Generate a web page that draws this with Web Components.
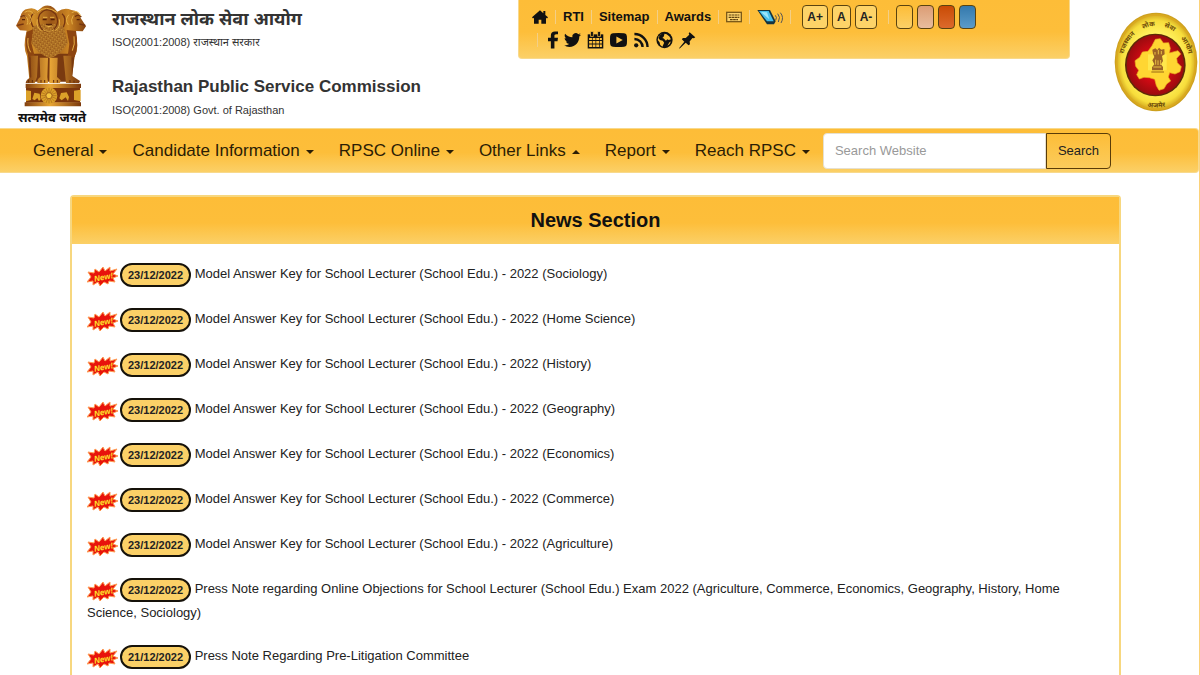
<!DOCTYPE html>
<html lang="en">
<head>
<meta charset="utf-8">
<meta name="viewport" content="width=device-width, initial-scale=1">
<title>Rajasthan Public Service Commission</title>
<style>
    html {
        overflow: hidden;
    }

    body {
        --bar: linear-gradient(#fdbd38 0%, #fdbe3a 55%, #fbd067 100%);
        --edge: #f8d98c;
        margin: 0;
        border-right: 1px solid #fbd27a;
        background: white;
        color: #222;
        font: 13px/22px "Liberation Sans", "Noto Sans", sans-serif;
    }
</style>
</head>
<body>
<site-header></site-header>
<main-nav>
    <nav-item>General</nav-item>
    <nav-item>Candidate Information</nav-item>
    <nav-item>RPSC Online</nav-item>
    <nav-item open>Other Links</nav-item>
    <nav-item>Report</nav-item>
    <nav-item>Reach RPSC</nav-item>
</main-nav>
<news-panel>
    <span slot="title">News Section</span>
    <news-item date="23/12/2022">Model Answer Key for School Lecturer (School Edu.) - 2022 (Sociology)</news-item>
    <news-item date="23/12/2022">Model Answer Key for School Lecturer (School Edu.) - 2022 (Home Science)</news-item>
    <news-item date="23/12/2022">Model Answer Key for School Lecturer (School Edu.) - 2022 (History)</news-item>
    <news-item date="23/12/2022">Model Answer Key for School Lecturer (School Edu.) - 2022 (Geography)</news-item>
    <news-item date="23/12/2022">Model Answer Key for School Lecturer (School Edu.) - 2022 (Economics)</news-item>
    <news-item date="23/12/2022">Model Answer Key for School Lecturer (School Edu.) - 2022 (Commerce)</news-item>
    <news-item date="23/12/2022">Model Answer Key for School Lecturer (School Edu.) - 2022 (Agriculture)</news-item>
    <news-item date="23/12/2022">Press Note regarding Online Objections for School Lecturer (School Edu.) Exam 2022 (Agriculture, Commerce, Economics, Geography, History, Home Science, Sociology)</news-item>
    <news-item date="21/12/2022">Press Note Regarding Pre-Litigation Committee</news-item>
</news-panel>

<script>
const icons = {
    home: `<path d="M12 2 0 12.5l1.5 1.7L3 13v9h7v-6h4v6h7v-9l1.500 1.200L24 12.500l-4-3.500V3h-3v3.300z"/>`,
    facebook: `<path d="M19 0v4h-2.500C14.400 4 14 5 14 6.500V9h5l-.7 4.600H14V24H9V13.600H5V9h4V5.600C9 2 11.200 0 14.700 0z"/>`,
    twitter: `<path d="M23.953 4.57a10 10 0 01-2.825.775 4.958 4.958 0 002.163-2.723c-.951.555-2.005.959-3.127 1.184a4.92 4.92 0 00-8.384 4.482C7.69 8.095 4.067 6.13 1.64 3.162a4.822 4.822 0 00-.666 2.475c0 1.71.87 3.213 2.188 4.096a4.904 4.904 0 01-2.228-.616v.06a4.923 4.923 0 003.946 4.827 4.996 4.996 0 01-2.212.085 4.936 4.936 0 004.604 3.417 9.867 9.867 0 01-6.102 2.105c-.39 0-.779-.023-1.17-.067a13.995 13.995 0 007.557 2.209c9.053 0 13.998-7.496 13.998-13.985 0-.21 0-.42-.015-.63A9.935 9.935 0 0024 4.59z"/>`,
    calendar: `<path d="M1 4h22v20H1z"/><path fill="#fdc03f" d="M3 9h4v3H3zm5 0h4v3H8zm5 0h4v3h-4zm5 0h3v3h-3zM3 13.500h4v3.500H3zm5 0h4v3.500H8zm5 0h4v3.500h-4zm5 0h3v3.500h-3zM3 18.500h4V22H3zm5 0h4V22H8zm5 0h4V22h-4zm5 0h3V22h-3z"/><path stroke="#fdc03f" d="M5 0h4v7H5zm10 0h4v7h-4z"/>`,
    youtube: `<path fill-rule="evenodd" d="M4 2.500Q12 1.500 20 2.500q3.500.4 3.800 4 .4 5.500 0 11-.3 3.600-3.800 4-8 1-16 0-3.500-.4-3.800-4-.4-5.500 0-11Q.5 2.900 4 2.500zM9 7v10l9-5z"/>`,
    rss: `<g fill="none" stroke="#111" stroke-width="3.400"><path d="M2 3.500A18.500 18.500 0 0 1 20.500 22"/><path d="M2 10.500A11.500 11.500 0 0 1 13.500 22"/></g><circle cx="4.500" cy="19.500" r="3"/>`,
    globe: `<circle cx="12" cy="12" r="11.500"/><path fill="#fdc341" d="M9 2.500 5.500 5 3.500 9l2 3 4 1 2 3-2.500 5.500L6 19l-1-4-2.500-3 1-5zM12 3l3 1 4 3 2 4-3 1-2-1-2 2-3-3-2-1 2-2zm7 12 2-1-2 4-3 2z"/>`,
    pin: `<path d="M15 1l8 7-2 1.500-2-.5-4 5 .5 4-2 1.500-4-3.500L1 24l-1-.5 7.500-9L4 11l1.500-2 4 0 5-4.500-.8-2z"/>`,
    keyboard: `<path fill="#7c5a18" d="M0 4h24v16H0z"/><path fill="#fdd36c" d="M2 6h20v12H2z"/><path stroke="#5f430f" stroke-width="1.800" d="M4 9h16M4 12.500h16M6 16h12" stroke-dasharray="4 .7"/>`
};

class FaIcon extends HTMLElement {
    constructor() {
        super();
        this.shadowDOM = this.attachShadow({mode: "open"});
    }

    connectedCallback() {
        const name = this.getAttribute("name"),
            // the f is much narrower than the other icons
            box = name === "facebook" ? "5 0 14 24" : "0 0 24 24";

        this.shadowDOM.innerHTML = `
            <style>
                :host {
                    display: block;
                    width: 16px;
                    height: 16px;
                }

                svg {
                    display: block;
                    width: 100%;
                    height: 100%;
                    fill: #111;
                }
            </style>
            <svg viewBox="${box}" aria-hidden="true">${icons[name]}</svg>`;
    }
}

class StateEmblem extends HTMLElement {
    constructor() {
        super();
        this.shadowDOM = this.attachShadow({mode: "open"});
    }

    connectedCallback() {
        this.shadowDOM.innerHTML = `
            <style>
                :host {
                    display: flex;
                    flex-direction: column;
                    align-items: center;
                    width: 74px;
                }

                svg {
                    width: 74px;
                    height: 104px;
                }

                span {
                    color: #111;
                    font-size: 13px;
                    font-weight: bold;
                    line-height: 20px;
                    white-space: nowrap;
                }
            </style>
            <svg viewBox="45 12 222 310" role="img" aria-label="State emblem">
                <defs>
                    <linearGradient id="gold" x2="1">
                        <stop offset="0" stop-color="#a65a1a"/>
                        <stop offset=".25" stop-color="#d08d27"/>
                        <stop offset=".5" stop-color="#9a5517"/>
                        <stop offset=".75" stop-color="#cb8523"/>
                        <stop offset="1" stop-color="#83400f"/>
                    </linearGradient>
                    <linearGradient id="leg" x2="1">
                        <stop offset="0" stop-color="#82400f"/>
                        <stop offset=".45" stop-color="#e8a636"/>
                        <stop offset="1" stop-color="#7a380c"/>
                    </linearGradient>
                    <pattern id="mane" width="9" height="9" patternUnits="userSpaceOnUse" patternTransform="rotate(35)">
                        <rect width="9" height="9" fill="#8c4a13"/>
                        <path d="M0 2h7M2 6h7" stroke="#efbd48" stroke-width="2"/>
                    </pattern>
                </defs>
                <path fill="url(#gold)" d="M60 90 48 76l12-23Q64 27 85 25q16-5 28 6l15-12q18-8 34 4l10 11q22-15 42-5 24 2 28 24l16 25-10 15-22-1q13 54-2 75l-9 70H88l-7-69Q67 139 80 91z"/>
                <path fill="#7a3a10" d="M84 160h140l-9 84H90z"/>
                <path fill="url(#mane)" d="M98 77q50-14 92 0l14 50q-20 36-54 47-39-14-57-50z"/>
                <path fill="#8d4510" d="M80 95q-8 48 8 76l18 4-12-46 5-42zm148-3q9 47-4 78l-22 5 6-44-8-42z"/>
                <g fill="none" stroke="#753510" stroke-width="4">
                    <path d="M102 38q-18 13-3 42M186 40q16 12 4 41"/>
                    <path d="M119 42q22-27 48 0 14 26-5 45-18 14-37-1-16-24-6-44z"/>
                    <path d="M62 50q10-9 18 1M52 75l19-4M225 49q10-8 19 1M256 75l-18-4"/>
                </g>
                <g fill="none" stroke="#e7b044" stroke-width="3">
                    <path d="M74 36q18-11 28 7M85 42q16 14 3 30M76 46q12 14 5 27M215 37q18-10 27 9M207 43q-14 13-2 31M220 45q-9 13-3 27M112 36q26-24 60 1M112 57q-5 24 13 35M178 57q5 24-12 34"/>
                    <path d="M129 51h13m8 0h13M138 76q9 6 18 0M129 88q17 10 33 0"/>
                    <path d="M84 113q-3 25 8 43m130-48q4 24-5 43"/>
                </g>
                <path fill="#562207" d="M128 55h12v5h-12zm24 0h12v5h-12zM66 56h9v4h-9zm164 0h9v4h-9zM138 70h18v5h-18z"/>
                <g fill="url(#leg)">
                    <path d="M92 166h22l-3 64-7 18H77q2-12 17-17zM119 172h25l-2 58 2 18h-32q-2-12 9-18zM149 172h24l-2 58 11 10-2 8h-32zM190 166h24l2 60 24 16-3 6h-39z"/>
                    <path d="M77 250h166v13H77z"/>
                    <path fill="#7c360c" d="M78 263h162v44H78z"/>
                    <path d="M74 306h169v12H74z"/>
                </g>
                <path stroke="#602a0a" stroke-width="3" d="M86 247v-8m11 8v-8m26 8v-8m11 8v-8m27 8v-8m11 8v-8m38 8v-8m12 8v-6"/>
                <g fill="#dca129">
                    <circle cx="147" cy="286" r="25"/>
                    <path d="m78 270 15 2v27l-15 4zM242 268l-20 3v28l20 4zM97 296l6-19 16 3 3 17-5 5-5-9-8 7zM178 294l5-16 17-2 7 14-3 12-7-11-12 9z"/>
                </g>
                <path stroke="#a7681b" stroke-width="2" d="M147 263v46m-23-23h46m-39-16 32 32m0-32-32 32m7-38 18 44m0-44-18 44m-13-31 44 18m0-18-44 18"/>
                <circle cx="147" cy="286" r="9" fill="#f6c63f" stroke="#8b4b14" stroke-width="2"/>
            </svg>
            <span lang="hi">सत्यमेव जयते</span>`;
    }
}

class CommissionSeal extends HTMLElement {
    constructor() {
        super();
        this.shadowDOM = this.attachShadow({mode: "open"});
    }

    connectedCallback() {
        this.shadowDOM.innerHTML = `
            <style>
                :host {
                    display: block;
                    width: 84px;
                    height: 100px;
                }

                svg {
                    display: block;
                    width: 100%;
                    height: 100%;
                }

                text {
                    fill: #6d4a08;
                    font-size: 20px;
                    font-weight: bold;
                }
            </style>
            <svg viewBox="43 37 252 300" role="img" aria-label="Commission seal">
                <defs>
                    <radialGradient id="ring">
                        <stop offset=".6" stop-color="#fff05d"/>
                        <stop offset=".84" stop-color="#f7dd3b"/>
                        <stop offset="1" stop-color="#c99a1a"/>
                    </radialGradient>
                    <radialGradient id="red">
                        <stop offset=".5" stop-color="#d50a14"/>
                        <stop offset="1" stop-color="#9c0b0e"/>
                    </radialGradient>
                    <path id="arc" d="M69 222A102 120 0 1 1 269 222"/>
                    <path id="low" d="M120 315Q169 332 220 315"/>
                </defs>
                <ellipse cx="169" cy="187" rx="124" ry="148" fill="url(#ring)"/>
                <ellipse cx="169" cy="187" rx="118" ry="141" fill="none" stroke="#dba91f" stroke-width="4"/>
                <ellipse cx="167" cy="196" rx="91" ry="94" fill="#5d2a06"/>
                <ellipse cx="167" cy="196" rx="86" ry="90" fill="url(#red)"/>
                <path fill="#ffd632" stroke="#e9a91c" stroke-width="2" d="m106 183 14-10 8-16 17-2 12-17 10-19 15-2 9 13 16-1 5 17-3 14 26-7 8 10-12 13 2 13 12 12-4 15-15 7-16-4-4 13 7 12-12 9-8 14-15 5-8-14-5-19-16-5-16-1-14 5-8-13 6-13-9-12z"/>
                <path fill="#fff15e" d="M145 164h56v48h-56z" opacity=".6"/>
                <path fill="#9c6226" d="M160 162l-2-12 9-4 6 5 5-7 7 6 9-2 1 16-8 5 3 15-6 10 6 8v10h-33v-9l7-9-6-12 6-10z"/>
                <path stroke="#e9bf42" stroke-width="3" fill="none" d="M166 157v8m10-14v13m9-10v10M168 180v15m7-13v14m8-15v15M161 202h24"/>
                <path stroke="#976617" stroke-width="3" d="M155 217h38"/>
                <text lang="hi"><textPath href="#arc" startOffset="50%" text-anchor="middle">राजस्थान &#160; &#160; लोक &#160; &#160; सेवा &#160; &#160; आयोग</textPath></text>
                <text lang="hi"><textPath href="#low" startOffset="50%" text-anchor="middle">अजमेर</textPath></text>
            </svg>`;
    }
}

class ToolBar extends HTMLElement {
    constructor() {
        super();
        this.shadowDOM = this.attachShadow({mode: "open"});
    }

    connectedCallback() {
        this.shadowDOM.innerHTML = `
            <style>
                :host {
                    display: block;
                    box-sizing: border-box;
                    height: 59px;
                    padding: 4px 13px 0;
                    background: var(--bar);
                    border: 1px solid var(--edge);
                    border-top: 0;
                    border-radius: 0 0 4px 4px;
                    font-weight: bold;
                }

                .row {
                    display: flex;
                    align-items: center;
                    height: 25px;
                }

                .links {
                    gap: 7px;
                }

                .social {
                    gap: 6px;
                    padding-left: 5px;
                    height: 22px;
                }

                .social fa-icon {
                    width: 17px;
                    height: 18px;
                }

                .social .narrow fa-icon {
                    width: 10px;
                    margin-left: 4px;
                }

                a {
                    color: #111;
                    text-decoration: none;
                }

                i {
                    width: 1px;
                    height: 14px;
                    background: #f3cf87;
                }

                .screen {
                    display: block;
                    width: 26px;
                    height: 16px;
                }

                button {
                    box-sizing: border-box;
                    height: 24px;
                    padding: 0 4px;
                    border: 1px solid #5a430f;
                    border-radius: 4px;
                    background: #fdd368;
                    color: #222;
                    font: bold 12px/20px "Liberation Sans", sans-serif;
                }

                .sizes, .themes {
                    display: flex;
                    gap: 4px;
                }

                .sizes {
                    margin: 0 4px;
                }

                .themes button {
                    width: 17px;
                    padding: 0;
                }
            </style>
            <div class="row links">
                <a href="#home" aria-label="Home"><fa-icon name="home"></fa-icon></a>
                <i></i>
                <a href="#rti">RTI</a>
                <i></i>
                <a href="#sitemap">Sitemap</a>
                <i></i>
                <a href="#awards">Awards</a>
                <i></i>
                <a href="#keyboard" aria-label="Keyboard"><fa-icon name="keyboard"></fa-icon></a>
                <i></i>
                <a href="#reader" aria-label="Screen reader">
                    <svg class="screen" viewBox="0 0 78 48">
                        <path fill="#16343f" d="M1 3h38l17 34-5 9H30z"/>
                        <path fill="#49c0ea" d="M6 6h29l15 31H30z"/>
                        <path fill="#9be5fa" d="m12 9 18 1 7 21z"/>
                        <path fill="none" stroke="#555" stroke-width="3" d="M55 19q6 6 1 15m6-20q10 10 2 25m6-28q12 14 2 31"/>
                    </svg>
                </a>
                <i></i>
                <div class="sizes">
                    <button type="button">A+</button>
                    <button type="button">A</button>
                    <button type="button">A-</button>
                </div>
                <i></i>
                <div class="themes">
                    <button type="button" aria-label="Yellow theme" style="background: linear-gradient(#fdbd38, #fbd067)"></button>
                    <button type="button" aria-label="Peach theme" style="background: linear-gradient(#dc9d75, #e8bd9e)"></button>
                    <button type="button" aria-label="Orange theme" style="background: linear-gradient(#c94b05, #dc6a2c)"></button>
                    <button type="button" aria-label="Blue theme" style="background: linear-gradient(#3479ad, #5b9bc8)"></button>
                </div>
            </div>
            <div class="row social">
                <i></i>
                <a class="narrow" href="#facebook" aria-label="Facebook"><fa-icon name="facebook"></fa-icon></a>
                <a href="#twitter" aria-label="Twitter"><fa-icon name="twitter"></fa-icon></a>
                <a href="#calendar" aria-label="Calendar"><fa-icon name="calendar"></fa-icon></a>
                <a href="#youtube" aria-label="YouTube"><fa-icon name="youtube"></fa-icon></a>
                <a href="#rss" aria-label="RSS"><fa-icon name="rss"></fa-icon></a>
                <a href="#world" aria-label="Websites"><fa-icon name="globe"></fa-icon></a>
                <a href="#pin" aria-label="Notices"><fa-icon name="pin"></fa-icon></a>
            </div>`;
    }
}

class SiteHeader extends HTMLElement {
    constructor() {
        super();
        this.shadowDOM = this.attachShadow({mode: "open"});
    }

    connectedCallback() {
        this.shadowDOM.innerHTML = `
            <style>
                :host {
                    display: grid;
                    grid-template-columns: 97px 406px minmax(0, 1fr) 129px;
                    height: 128px;
                    padding-left: 15px;
                }

                state-emblem {
                    margin-top: 4px;
                }

                commission-seal {
                    margin: 12px 1px 0 auto;
                }

                .names {
                    padding-top: 6px;
                    color: #333;
                }

                h1, h2 {
                    margin: 0;
                    font-size: 18px;
                    line-height: 26px;
                }

                h2 {
                    margin-top: 22px;
                    font-size: 17px;
                }

                p {
                    margin: 0;
                    font-size: 11px;
                    line-height: 20px;
                }
            </style>
            <state-emblem></state-emblem>
            <div class="names">
                <h1 lang="hi">राजस्थान लोक सेवा आयोग</h1>
                <p>ISO(2001:2008) राजस्थान सरकार</p>
                <h2>Rajasthan Public Service Commission</h2>
                <p>ISO(2001:2008) Govt. of Rajasthan</p>
            </div>
            <tool-bar></tool-bar>
            <commission-seal></commission-seal>`;
    }
}

class MainNav extends HTMLElement {
    constructor() {
        super();
        this.shadowDOM = this.attachShadow({mode: "open"});
    }

    connectedCallback() {
        this.shadowDOM.innerHTML = `
            <style>
                :host {
                    display: block;
                }

                nav {
                    display: flex;
                    align-items: center;
                    box-sizing: border-box;
                    height: 45px;
                    padding: 0 87px 0 33px;
                    background: var(--bar);
                    border: 1px solid var(--edge);
                    border-left: 0;
                    border-radius: 0 4px 4px 0;
                }

                .items {
                    display: flex;
                    gap: 25px;
                }

                form {
                    display: flex;
                    flex: 1;
                    margin-left: 13px;
                }

                input, button {
                    box-sizing: border-box;
                    height: 36px;
                    font: 13px "Liberation Sans", sans-serif;
                }

                input {
                    flex: 1;
                    min-width: 0;
                    padding: 0 11px;
                    border: 1px solid #e6e0d0;
                    border-radius: 4px 0 0 4px;
                    background: white;
                }

                input::placeholder {
                    color: #999;
                }

                button {
                    width: 65px;
                    padding: 0;
                    border: 1px solid #5a3c08;
                    border-radius: 0 4px 4px 0;
                    background: linear-gradient(#fdbd38, #fbcc5c);
                    color: #222;
                }
            </style>
            <nav>
                <div class="items"><slot></slot></div>
                <form>
                    <input type="search" placeholder="Search Website" aria-label="Search Website">
                    <button type="button">Search</button>
                </form>
            </nav>`;
    }
}

class NavItem extends HTMLElement {
    constructor() {
        super();
        this.shadowDOM = this.attachShadow({mode: "open"});
    }

    connectedCallback() {
        const open = this.hasAttribute("open");

        this.shadowDOM.innerHTML = `
            <style>
                :host {
                    display: block;
                }

                button {
                    display: flex;
                    align-items: center;
                    gap: 6px;
                    padding: 0;
                    border: 0;
                    background: none;
                    color: #2b1d05;
                    font: 17px/24px "Liberation Sans", sans-serif;
                    white-space: nowrap;
                    cursor: pointer;
                }

                button::after {
                    content: "";
                    margin-top: 2px;
                    border: 4px solid transparent;
                    border-top-color: #2b1d05;
                    border-bottom: 0;
                }

                button[aria-expanded=true]::after {
                    border-top: 0;
                    border-bottom: 4px solid #2b1d05;
                }
            </style>
            <button type="button" aria-expanded="${open}"><slot></slot></button>`;
    }
}

class NewsPanel extends HTMLElement {
    constructor() {
        super();
        this.shadowDOM = this.attachShadow({mode: "open"});
    }

    connectedCallback() {
        this.shadowDOM.innerHTML = `
            <style>
                :host {
                    display: block;
                    margin: 22px 78px 0 70px;
                }

                section {
                    border: 2px solid #f7d77f;
                    border-radius: 4px;
                }

                h2 {
                    margin: 0;
                    background: var(--bar);
                    color: #111;
                    font-size: 20px;
                    line-height: 47px;
                    text-align: center;
                }

                .list {
                    padding: 19px 15px 0;
                }
            </style>
            <section>
                <h2><slot name="title"></slot></h2>
                <div class="list" role="list"><slot></slot></div>
            </section>`;
    }
}

class NewsItem extends HTMLElement {
    constructor() {
        super();
        this.shadowDOM = this.attachShadow({mode: "open"});
    }

    connectedCallback() {
        this.setAttribute("role", "listitem");
        this.shadowDOM.innerHTML = `
            <style>
                :host {
                    display: block;
                    margin-bottom: 21px;
                }

                a {
                    color: #222;
                    text-decoration: none;
                }

                svg {
                    width: 33px;
                    height: 22px;
                    vertical-align: -8px;
                }

                svg text {
                    fill: #ffe92e;
                    font: italic bold 8px "Liberation Sans", sans-serif;
                }

                time {
                    display: inline-block;
                    box-sizing: border-box;
                    width: 71px;
                    border: 2px solid #16120a;
                    border-radius: 12px;
                    background: #fbd067;
                    color: #222;
                    font-size: 11px;
                    font-weight: bold;
                    line-height: 20px;
                    text-align: center;
                    vertical-align: middle;
                }
            </style>
            <a href="#news"><svg viewBox="0 0 33 22" aria-hidden="true">
                <path fill="#e8130c" stroke="#ff9b52" stroke-width="1" d="m1 8 6 1 1-4 4 3 4-5 2 4 5-4v4l7-2-4 5 5 2-5 2 2 4-6-1-1 3-4-2-4 4-2-4-5 3v-4l-6 1 4-5z"/>
                <text x="7" y="16" transform="rotate(-12 16 13)">New!</text>
            </svg><time>${this.getAttribute("date")}</time> <slot></slot></a>`;
    }
}

customElements.define("fa-icon", FaIcon);
customElements.define("state-emblem", StateEmblem);
customElements.define("commission-seal", CommissionSeal);
customElements.define("tool-bar", ToolBar);
customElements.define("site-header", SiteHeader);
customElements.define("main-nav", MainNav);
customElements.define("nav-item", NavItem);
customElements.define("news-panel", NewsPanel);
customElements.define("news-item", NewsItem);
</script>
</body>
</html>
